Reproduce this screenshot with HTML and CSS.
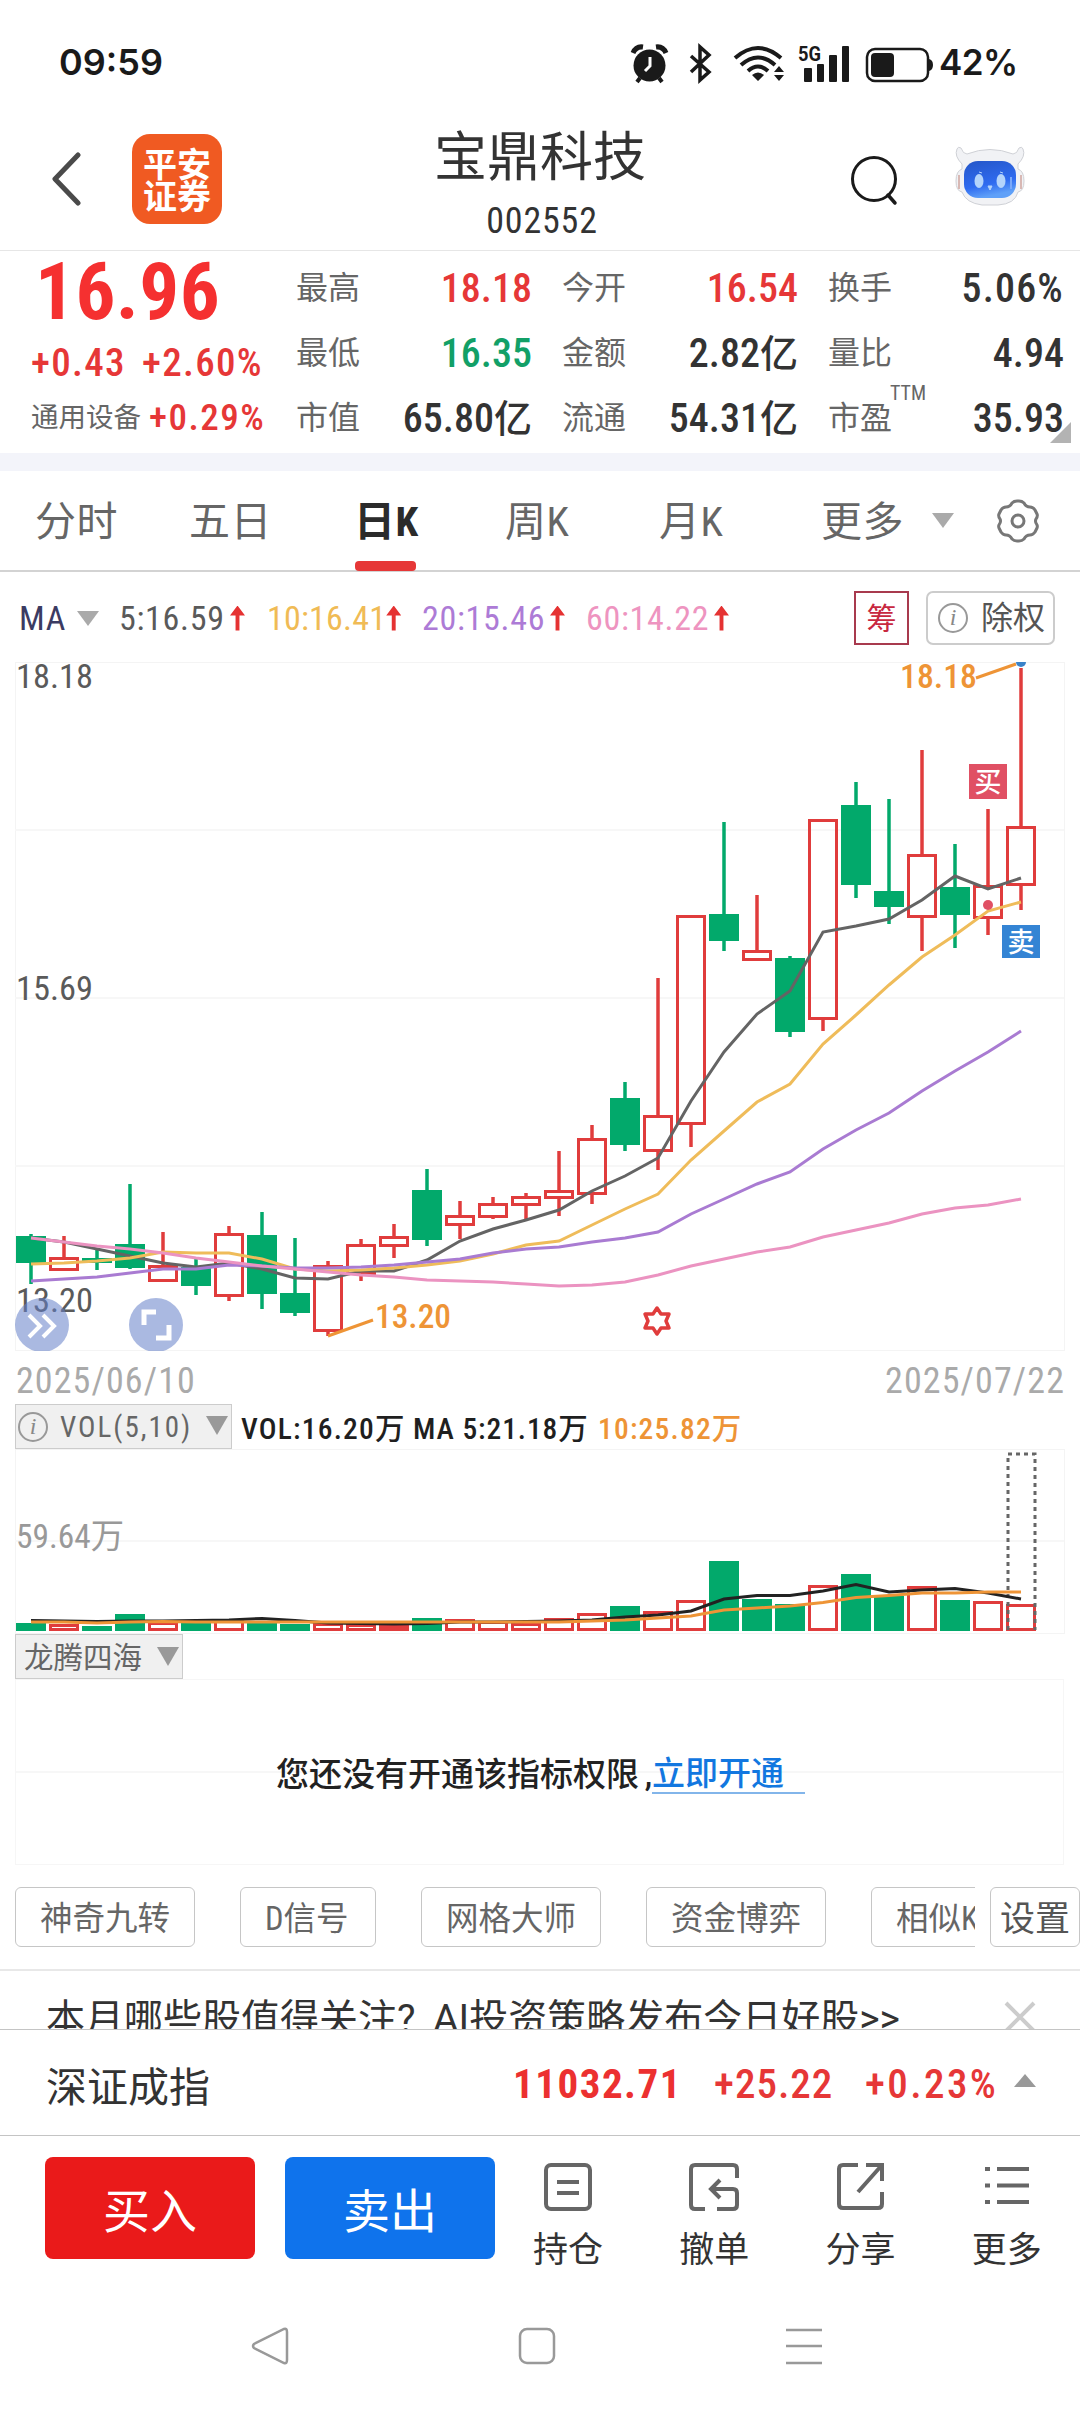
FILE: index.html
```html
<!DOCTYPE html>
<html lang="zh-CN">
<head>
    <meta charset="UTF-8">
    <meta name="viewport" content="width=device-width, initial-scale=1.0">
    <title>宝鼎科技 002552</title>
    <link rel="stylesheet" href="styles.css">
</head>
<body>
    <!-- 状态栏 -->
    <div class="status-bar">
        <span class="clock">09:59</span>
        <svg class="status-icons" width="315" height="60" viewBox="620 30 315 60" fill="#1a1a1a">
            <circle cx="649.5" cy="63.500" r="16"/>
            <path d="M633 51q3-7 10-6M666 51q-3-7-10-6" fill="none" stroke="#1a1a1a" stroke-width="5"/>
            <path d="M640 76l-3 4M659 76l3 4" stroke="#1a1a1a" stroke-width="4"/>
            <path d="M650 55v9l-5 5" fill="none" stroke="#fff" stroke-width="3"/>
            <path d="M691 54l18 16-9 8V45l9 8-18 17" fill="none" stroke="#1a1a1a" stroke-width="3.5"/>
            <path d="M735 56q23-20 46 0M741 63q17-15 34 0M748 69q10-9 20 0" fill="none" stroke="#1a1a1a" stroke-width="4"/>
            <path d="M758 79l-6-6q6-5 12 0zM774 70l5-6 5 6zM774 73h10l-5 6z"/>
            <rect x="804" y="66" width="8" height="14" rx="1"/>
            <rect x="817" y="62" width="7" height="18" rx="1"/>
            <rect x="829" y="53" width="8" height="27" rx="1"/>
            <rect x="842" y="44" width="7" height="36" rx="1"/>
            <text x="798" y="59" class="net-label" textLength="23" lengthAdjust="spacingAndGlyphs">5G</text>
            <rect x="867" y="47" width="61" height="32" rx="8" fill="none" stroke="#1a1a1a" stroke-width="2.5"/>
            <rect x="871" y="51" width="23" height="24" rx="4"/>
            <path d="M929 57q4 1 4 6t-4 6z"/>
        </svg>
        <span class="battery">42%</span>
    </div>

    <!-- 顶部标题 -->
    <div class="header">
        <svg class="back" width="32" height="54" viewBox="0 0 32 54"><path d="M28 3L5 27l23 24" fill="none" stroke="#4a4a4a" stroke-width="5" stroke-linecap="round" stroke-linejoin="round"/></svg>
        <div class="broker-logo">平安<br>证券</div>
        <div class="title">
            <div class="stock-name">宝鼎科技</div>
            <div class="stock-code">002552</div>
        </div>
        <svg class="search" width="50" height="54" viewBox="0 0 50 54"><circle cx="24" cy="25" r="21.500" fill="none" stroke="#1a1a1a" stroke-width="3"/><path d="M38 41l7 8" stroke="#1a1a1a" stroke-width="3.500" stroke-linecap="round"/></svg>
        <svg class="robot" width="76" height="62" viewBox="0 0 76 62">
            <defs>
                <linearGradient id="face" x1="0" y1="0" x2="0.300" y2="1">
                    <stop offset="0" stop-color="#2456c8"/>
                    <stop offset="0.700" stop-color="#2f6bf0"/>
                    <stop offset="1" stop-color="#5fa0f8"/>
                </linearGradient>
            </defs>
            <path d="M10 20Q2 12 5 5q1-3 4-1 2 6 6 6 23-9 46 0 4 0 6-6 3-2 4 1 3 7-5 15v5q6 2 6 12t-6 11q-3 12-20 13H30Q14 59 10 48q-6-1-6-11t6-12z" fill="#f1f2f5" stroke="#cfd1d6" stroke-width="1"/>
            <path d="M7 31v14M69 31v14" stroke="#d8b8b4" stroke-width="2"/>
            <rect x="12" y="17" width="52" height="37" rx="14" fill="url(#face)"/>
            <ellipse cx="27" cy="37" rx="4.500" ry="7" fill="#b4d4fb"/>
            <ellipse cx="49" cy="37" rx="4.500" ry="7" fill="#b4d4fb"/>
            <path d="M36 42h4l-2 4zM27 28l3 1M48 28l3 1" fill="#b4d4fb" stroke="#b4d4fb"/>
            <path d="M59 33v12" stroke="#7aa8fa" stroke-width="2"/>
        </svg>
    </div>

    <!-- 行情 -->
    <div class="quote">
        <div class="quote-main">
            <div class="price">16.96</div>
            <div class="change"><span>+0.43</span><span>+2.60%</span></div>
            <div class="sector"><span class="sector-name">通用设备</span><span class="sector-change">+0.29%</span></div>
        </div>
        <div class="quote-grid">
            <div class="cell"><label>最高</label><b class="up">18.18</b></div>
            <div class="cell"><label>今开</label><b class="up">16.54</b></div>
            <div class="cell"><label>换手</label><b class="wide">5.06%</b></div>
            <div class="cell"><label>最低</label><b class="down">16.35</b></div>
            <div class="cell"><label>金额</label><b>2.82<i>亿</i></b></div>
            <div class="cell"><label>量比</label><b>4.94</b></div>
            <div class="cell"><label>市值</label><b>65.80<i>亿</i></b></div>
            <div class="cell"><label>流通</label><b>54.31<i>亿</i></b></div>
            <div class="cell"><label>市盈<sup>TTM</sup></label><b>35.93</b></div>
        </div>
        <div class="corner"></div>
    </div>

    <!-- 周期切换 -->
    <div class="tabs">
        <span>分时</span>
        <span>五日</span>
        <span class="active">日K</span>
        <span>周K</span>
        <span>月K</span>
        <span>更多</span>
        <em class="arrow-down"></em>
        <svg width="44" height="44" viewBox="0 0 44 44" fill="none" stroke="#777" stroke-width="3" stroke-linejoin="round">
            <path d="M16 4q2-2 5-2h2q3 0 5 2 2 4 6 4 3 0 5 3l2 4q1 2-1 5-1 2 0 4 2 3 1 5l-2 4q-2 3-5 3-4 0-6 4-2 2-5 2h-2q-3 0-5-2-2-4-6-4-3 0-5-3l-2-4q-1-2 1-5 1-2 0-4-2-3-1-5l2-4q2-3 5-3 4 0 6-4z"/>
            <circle cx="22" cy="22" r="6"/>
        </svg>
    </div>

    <!-- 均线 -->
    <div class="ma-row">
        <span class="ma-name">MA</span>
        <em class="arrow-down"></em>
        <span class="ma ma5">5:16.59</span>
        <span class="ma ma10">10:16.41</span>
        <span class="ma ma20">20:15.46</span>
        <span class="ma ma60">60:14.22</span>
        <span class="chip-cost">筹</span>
        <span class="chip-right"><i class="info">i</i>除权</span>
    </div>

    <svg id="kline" class="kline" width="1080" height="689" viewBox="0 662 1080 689"></svg>

    <div class="dates"><span>2025/06/10</span><span>2025/07/22</span></div>

    <!-- 成交量 -->
    <div class="ind-head">
        <span class="ind-select"><i class="info">i</i><span class="vol-name">VOL(5,10)</span><em class="arrow-down"></em></span>
        <span class="vol-text">VOL:16.20万</span>
        <span class="vol-text vol-ma5">MA 5:21.18万</span>
        <span class="vol-text vol-ma10">10:25.82万</span>
    </div>
    <svg id="volume" class="volume" width="1080" height="185" viewBox="0 1449 1080 185"></svg>

    <div class="ind-head">
        <span class="ind-select dragon">龙腾四海<em class="arrow-down"></em></span>
    </div>
    <div class="locked">
        <span class="locked-text">您还没有开通该指标权限</span><span class="comma">,</span><a class="locked-link">立即开通</a>
    </div>

    <div class="tools">
        <div class="tool-list">
            <span>神奇九转</span>
            <span class="short">D信号</span>
            <span>网格大师</span>
            <span>资金博弈</span>
            <span>相似K线</span>
        </div>
        <span class="tool-set">设置</span>
    </div>

    <div class="banner">
        <span>本月哪些股值得关注? AI投资策略发布今日好股&gt;&gt;</span>
        <svg width="32" height="32" viewBox="0 0 32 32"><path d="M2 2l28 28M30 2L2 30" stroke="#ccc" stroke-width="4"/></svg>
    </div>

    <div class="index-row">
        <span class="index-name">深证成指</span>
        <span class="index-value">11032.71</span>
        <span class="index-diff">+25.22</span>
        <span class="index-pct">+0.23%</span>
        <em class="arrow-up"></em>
    </div>

    <!-- 底部操作 -->
    <div class="actions">
        <div class="btn buy">买入</div>
        <div class="btn sell">卖出</div>
        <div class="action">
            <svg width="50" height="50" viewBox="0 0 50 50"><rect x="3" y="3" width="44" height="44" rx="5"/><path d="M14 20h22M14 31h22"/></svg>
            <span>持仓</span>
        </div>
        <div class="action">
            <svg width="50" height="50" viewBox="0 0 50 50"><path d="M48 16V7q0-4-4-4H6Q2 3 2 7v36q0 4 4 4h10M28 47h16q4 0 4-4V31q0-4-4-4H22M31 18l-9 9 9 9"/></svg>
            <span>撤单</span>
        </div>
        <div class="action">
            <svg width="50" height="50" viewBox="0 0 50 50"><path d="M22 3H7Q3 3 3 7v35q0 4 4 4h35q4 0 4-4V30M30 3h16v16M46 3L22 30"/></svg>
            <span>分享</span>
        </div>
        <div class="action">
            <svg width="50" height="50" viewBox="0 0 50 50"><path d="M3 7h5M3 23.500h5M3 40h5M15 7h32M15 23.500h32M15 40h32"/></svg>
            <span>更多</span>
        </div>
    </div>

    <div class="nav">
        <svg width="40" height="40" viewBox="0 0 40 40"><path d="M34 3Q37 2 37 6v28q0 4-3 3L4 22q-2-2 0-4z"/></svg>
        <svg width="40" height="40" viewBox="0 0 40 40"><rect x="3" y="3" width="34" height="34" rx="7"/></svg>
        <svg width="40" height="40" viewBox="0 0 40 40"><path d="M2 4h36M2 20h36M2 37h36"/></svg>
    </div>

    <script src="chart.js"></script>
</body>
</html>
```
FILE: styles.css
```css
* {
    box-sizing: border-box;
}
body {
    margin: 0;
    width: 1080px;
    height: 2412px;
    overflow: hidden;
    background: #fff;
    color: #333;
    font-family: Roboto, "Noto Sans CJK SC", sans-serif;
    font-stretch: 75%;
}
svg {
    display: block;
    flex: none;
}
i, em {
    font-style: normal;
}
.arrow-down {
    border: 11px solid transparent;
    border-top: 15px solid #aaa;
    border-bottom: 0;
}
.arrow-up {
    border: 11px solid transparent;
    border-bottom: 13px solid #999;
    border-top: 0;
}
.up {
    color: #e63737;
}
.down {
    color: #12a067;
}
.info {
    display: inline-block;
    width: 30px;
    height: 30px;
    border: 2px solid #999;
    border-radius: 50%;
    color: #888;
    font: italic 24px/25px "Liberation Serif", serif;
    text-align: center;
}

/* 状态栏 */
.status-bar {
    display: flex;
    align-items: center;
    height: 124px;
    padding-left: 59px;
    color: #1a1a1a;
    font: 600 36px Inter, sans-serif;
}
.clock {
    width: 561px;
}
.net-label {
    font: bold 20px Roboto, sans-serif;
}
.battery {
    margin-left: 4px;
    font-size: 35px;
    letter-spacing: -0.500px;
}

.header {
    display: flex;
    height: 127px;
    border-bottom: 1px solid #e6e6e6;
}
.back {
    margin: 28px 0 0 50px;
}
.broker-logo {
    width: 90px;
    height: 90px;
    margin: 10px 0 0 50px;
    padding-top: 13px;
    border-radius: 18px;
    background: #f05a22;
    color: #fff;
    font: bold 34px/32px "Noto Sans CJK SC", sans-serif;
    text-align: center;
}
.title {
    width: 320px;
    margin-left: 160px;
    padding-top: 3px;
    text-align: center;
}
.stock-name {
    height: 66px;
    margin-left: -4px;
    font-size: 53px;
    line-height: 62px;
}
.stock-code {
    font-size: 36px;
    letter-spacing: 0.800px;
    line-height: 56px;
}
.search {
    margin: 30px 0 0 148px;
}
.robot {
    margin: 20px 0 0 52px;
}

/* 行情 */
.quote {
    position: relative;
    display: flex;
    height: 220px;
    border-bottom: 18px solid #f3f4fa;
}
.quote-main {
    width: 297px;
    padding: 1px 0 0 31px;
    color: #e63737;
    font-weight: 500;
}
.price {
    height: 80px;
    padding-left: 4px;
    color: #f53030;
    font-size: 79px;
    font-weight: 700;
    letter-spacing: 0.500px;
    line-height: 80px;
}
.change {
    display: flex;
    height: 62px;
    font-size: 39px;
    letter-spacing: 1.300px;
    line-height: 62px;
}
.change span:first-child {
    width: 111px;
}
.sector {
    display: flex;
    height: 48px;
    font-size: 37px;
    letter-spacing: 1.500px;
    line-height: 48px;
}
.sector-name {
    width: 118px;
    color: #666;
    font-size: 27.500px;
    font-weight: 400;
    letter-spacing: 0;
}
.quote-grid {
    display: grid;
    grid-template-columns: repeat(3, 235px);
    grid-auto-rows: 65px;
    column-gap: 31px;
    padding-top: 5px;
}
.cell {
    display: flex;
    justify-content: space-between;
    line-height: 65px;
}
.cell label {
    position: relative;
    left: -1px;
    color: #666;
    font-size: 32px;
}
.cell sup {
    position: absolute;
    left: 62px;
    top: -23px;
    font-size: 20px;
    line-height: 60px;
}
.cell b {
    font-size: 40px;
    font-weight: 500;
}
.cell .wide {
    letter-spacing: 1.200px;
}
.cell i {
    font-size: 38px;
}
.corner {
    position: absolute;
    right: 9px;
    bottom: 10px;
    border-left: 21px solid transparent;
    border-bottom: 21px solid #b3b3b3;
}

.tabs {
    display: grid;
    grid-template-columns: 154px 165px 151px 154px 162px 111px 64px 44px;
    align-items: center;
    height: 101px;
    padding-left: 35px;
    border-bottom: 2px solid #d3d3d3;
    color: #666;
    font-size: 41px;
    letter-spacing: 0.500px;
    line-height: 99px;
}
.tabs span {
    height: 99px;
    padding-top: 2px;
}
.tabs em {
    justify-self: start;
}
.tabs .active {
    position: relative;
    color: #2b2b2b;
    font-weight: 700;
}
.tabs .active::after {
    content: "";
    position: absolute;
    left: 1px;
    bottom: -1px;
    width: 61px;
    height: 10px;
    border-radius: 4px;
    background: #e63737;
}

/* 均线 */
.ma-row {
    display: flex;
    align-items: center;
    height: 90px;
    padding: 2px 0 0 19px;
    font-size: 34px;
    letter-spacing: 0.700px;
    line-height: 90px;
}
.ma-name {
    width: 58px;
    color: #3b3b62;
    font-size: 34px;
}
.ma-row .arrow-down {
    margin-right: 20px;
}
.ma {
    display: flex;
    align-items: center;
}
.ma::after {
    content: "";
    flex: none;
    width: 15px;
    height: 25px;
    margin-left: auto;
    background: #e53232;
    clip-path: polygon(50% 0, 100% 40%, 63% 40%, 63% 100%, 37% 100%, 37% 40%, 0 40%);
}
.ma5 {
    width: 126px;
    color: #5a5a5a;
}
.ma10 {
    width: 134px;
    margin-left: 22px;
    color: #f0bb55;
    letter-spacing: 0.200px;
}
.ma20 {
    width: 143px;
    margin-left: 21px;
    color: #ad7bd6;
}
.ma60 {
    width: 143px;
    margin-left: 21px;
    color: #ee94c0;
}
.chip-cost {
    width: 55px;
    height: 54px;
    margin-left: 125px;
    border: 2px solid #a83a4e;
    color: #c8283f;
    font-size: 30px;
    letter-spacing: 0;
    line-height: 52px;
    text-align: center;
}
.chip-right {
    display: flex;
    align-items: center;
    gap: 13px;
    width: 129px;
    height: 54px;
    margin-left: 17px;
    padding-left: 10px;
    border: 2px solid #ccc;
    border-radius: 7px;
    color: #555;
    font-size: 32px;
    letter-spacing: 0;
    line-height: 53px;
    white-space: nowrap;
}

.kline text {
    font-size: 34px;
}
.kline .mark {
    fill: #ee9436;
    font-weight: 500;
}
.kline .badge {
    fill: #fff;
    font-size: 27px;
    font-weight: 500;
    text-anchor: middle;
}
.dates {
    display: flex;
    justify-content: space-between;
    height: 53px;
    padding: 0 15px 0 16px;
    color: #aaa;
    font-size: 36px;
    letter-spacing: 1.100px;
    line-height: 60px;
}

/* 指标 */
.ind-head {
    display: flex;
    height: 45px;
    padding-left: 15px;
    line-height: 45px;
}
.ind-select {
    display: flex;
    align-items: center;
    width: 217px;
    height: 45px;
    margin-right: 9px;
    padding-left: 2px;
    border: 1px solid #ccc;
    background: #f0f0f0;
    color: #666;
    font-size: 30px;
}
.ind-select .arrow-down {
    border-top: 19px solid #999;
    margin: 0 3px 3px auto;
}
.vol-name {
    margin-left: 12px;
    font-size: 29px;
    letter-spacing: 2px;
    line-height: 48px;
}
.dragon {
    width: 168px;
    padding: 3px 0 0 8px;
    font-size: 29.500px;
}
.vol-text {
    width: 172px;
    color: #1f1f1f;
    font-size: 29.500px;
    font-weight: 500;
    letter-spacing: 1.200px;
    line-height: 50px;
    white-space: nowrap;
}
.vol-ma5 {
    width: 185px;
    letter-spacing: 0.900px;
}
.vol-ma10 {
    color: #ee9436;
}
.volume text {
    font-size: 34px;
    fill: #999;
}
.locked {
    display: flex;
    align-items: center;
    height: 186px;
    margin: 0 16px 0 15px;
    padding: 5px 0 0 260px;
    border: 1px solid #f6f6f6;
    background: linear-gradient(#f7f7f7, #f7f7f7) 0 91px / 100% 2px no-repeat;
    color: #222;
    font-size: 33px;
    font-weight: 500;
    line-height: 36px;
}
.comma {
    width: 13px;
    text-align: right;
}
.locked-link {
    width: 153px;
    border-bottom: 2px solid #82b5ea;
    color: #1277e0;
}

.tools {
    display: flex;
    height: 106px;
    padding: 22px 0 0 15px;
    border-bottom: 2px solid #e8e8e8;
    line-height: 63px;
}
.tool-list {
    display: flex;
    gap: 45px;
    width: 960px;
    overflow: hidden;
}
.tool-list span, .tool-set {
    flex: none;
    width: 180px;
    height: 60px;
    padding-left: 24px;
    border: 1px solid #c6c6c6;
    border-radius: 6px;
    color: #666;
    font-size: 32.500px;
    white-space: nowrap;
}
.tool-list .short {
    width: 136px;
}
.tool-set {
    width: 90px;
    margin-left: 15px;
    padding-left: 9px;
    color: #555;
    font-size: 35px;
}
.banner {
    display: flex;
    justify-content: space-between;
    height: 59px;
    padding: 0 44px 0 46px;
    overflow: hidden;
    border-bottom: 1px solid #c4c4c4;
    font-size: 39px;
    font-stretch: 100%;
    line-height: 96px;
    word-spacing: 8px;
}
.banner svg {
    margin-top: 30px;
}
.index-row {
    display: flex;
    align-items: center;
    height: 106px;
    padding: 2px 0 0 46px;
    border-bottom: 1px solid #c4c4c4;
    color: #e63737;
    font-size: 41px;
}
.index-name {
    width: 467px;
    color: #333;
}
.index-value {
    width: 201px;
    color: #ec3030;
    font-weight: 700;
    letter-spacing: 1.500px;
}
.index-diff {
    width: 151px;
    font-weight: 500;
    letter-spacing: 1px;
}
.index-pct {
    width: 149px;
    font-weight: 500;
    letter-spacing: 2.400px;
}
.index-row .arrow-up {
    margin-bottom: 6px;
}

/* 底部操作 */
.actions {
    display: flex;
    height: 164px;
    padding: 21px 0 0 45px;
}
.btn {
    width: 210px;
    height: 102px;
    margin-right: 30px;
    border-radius: 8px;
    color: #fff;
    font-size: 47px;
    line-height: 110px;
    text-align: center;
}
.buy {
    background: #ea1a1a;
}
.sell {
    margin-right: 0;
    background: #0f73ec;
}
.action {
    display: flex;
    flex: 1;
    flex-direction: column;
    align-items: center;
    padding-top: 5px;
    font-size: 35px;
    line-height: 77px;
}
.action svg {
    fill: none;
    stroke: #666;
    stroke-width: 4;
}
.nav {
    display: flex;
    height: 112px;
    padding: 26px 0 0 250px;
}
.nav svg {
    margin-right: 227px;
    fill: none;
    stroke: #999;
    stroke-width: 2.500;
}
```
FILE: chart.js
```js
const RED = '#e03c3c';
const GREEN = '#02a96b';
const X0 = 31;
const STEP = 33;
const BAR = 30;

// [涨跌, 实体上, 实体下, 最高, 最低, 成交量顶部]
const bars = [
    [0, 1236, 1263, 1234, 1284, 1623], [1, 1257, 1271, 1236, 1271, 1624], [0, 1258, 1263, 1249, 1270, 1626],
    [0, 1244, 1268, 1184, 1269, 1614], [1, 1265, 1282, 1232, 1282, 1622], [0, 1267, 1286, 1259, 1295, 1623],
    [1, 1233, 1297, 1226, 1301, 1619], [0, 1235, 1294, 1212, 1309, 1622], [0, 1293, 1313, 1238, 1316, 1624],
    [1, 1265, 1332, 1261, 1336, 1623], [1, 1244, 1275, 1239, 1281, 1624], [1, 1236, 1247, 1224, 1258, 1625],
    [0, 1190, 1240, 1169, 1246, 1618], [1, 1215, 1226, 1201, 1239, 1619], [1, 1203, 1218, 1197, 1219, 1621],
    [1, 1196, 1206, 1193, 1221, 1623], [1, 1190, 1199, 1151, 1216, 1618], [1, 1138, 1195, 1125, 1204, 1613],
    [0, 1098, 1145, 1082, 1151, 1606], [1, 1115, 1152, 978, 1170, 1611], [1, 915, 1125, 915, 1147, 1600],
    [0, 914, 941, 822, 951, 1561], [1, 950, 961, 895, 961, 1599], [0, 958, 1032, 956, 1037, 1604],
    [1, 819, 1020, 819, 1031, 1585], [0, 805, 885, 782, 898, 1574], [0, 891, 907, 799, 924, 1596],
    [1, 854, 918, 750, 951, 1586], [0, 887, 915, 844, 948, 1600], [1, 885, 919, 809, 935, 1601],
    [1, 826, 886, 668, 910, 1604]
];
// 第22根成交量为阴线颜色
const volGreen = [22];

const ma5 = [1238, 1242, 1249, 1256, 1263, 1267, 1263, 1269, 1278, 1279, 1271, 1271, 1260, 1241, 1229, 1220, 1210, 1191, 1176, 1158, 1101, 1052, 1014, 991, 932, 926, 919, 900, 876, 889, 878];
const ma10 = [1264, 1263, 1261, 1258, 1252, 1253, 1253, 1259, 1269, 1271, 1270, 1268, 1265, 1261, 1254, 1245, 1241, 1225, 1209, 1194, 1160, 1131, 1102, 1084, 1044, 1015, 985, 957, 935, 911, 902];
const ma20 = [1281, 1279, 1277, 1273, 1269, 1269, 1265, 1266, 1268, 1268, 1267, 1265, 1262, 1259, 1253, 1249, 1247, 1242, 1238, 1232, 1214, 1199, 1184, 1172, 1149, 1130, 1113, 1091, 1071, 1052, 1031];
const ma60 = [1238, 1242, 1246, 1249, 1253, 1258, 1262, 1266, 1269, 1272, 1275, 1277, 1280, 1281, 1282, 1284, 1286, 1285, 1282, 1275, 1266, 1259, 1252, 1247, 1237, 1230, 1223, 1214, 1208, 1205, 1199];
const vol5 = [1620.5, 1621, 1621.5, 1621, 1621, 1620.5, 1620, 1618.5, 1620.5, 1623, 1623.5, 1624, 1623.5, 1622, 1622, 1621.5, 1621, 1620, 1617, 1615, 1611, 1599, 1595.5, 1595.5, 1591, 1584.5, 1592, 1590, 1588.5, 1593, 1599];
const vol10 = [1622, 1622, 1623, 1622, 1621.5, 1622, 1622, 1622, 1622, 1622, 1622, 1622, 1622, 1622, 1622, 1622, 1622, 1621, 1620, 1618, 1616, 1610, 1608, 1606, 1602.5, 1597.5, 1595.5, 1593, 1593, 1592, 1592];

const cx = i => X0 + STEP * i;

function rect(x, y, w, h, fill, stroke = 'none', sw = 0) {
    return `<rect x="${x + sw / 2}" y="${y + sw / 2}" width="${w - sw}" height="${h - sw}" fill="${fill}" stroke="${stroke}" stroke-width="${sw}"/>`;
}

function line(points, color, width = 3) {
    return `<polyline points="${points.map((y, i) => cx(i) + ',' + y).join(' ')}" fill="none" stroke="${color}" stroke-width="${width}"/>`;
}

function grid(top, bottom, rows) {
    return `<rect x="15.500" y="${top + 0.5}" width="1049" height="${bottom - top - 1}" fill="none" stroke="#f4f4f4"/>` +
        rows.map(y => `<path d="M15 ${y}H1064" stroke="#f7f7f7" stroke-width="2"/>`).join('');
}

function label(x, y, text, w, attrs) {
    return `<text x="${x}" y="${y}" textLength="${w}" lengthAdjust="spacingAndGlyphs" ${attrs}>${text}</text>`;
}

function drawKline() {
    let s = grid(662, 1351, [830, 998, 1166]);
    bars.forEach(([up, top, bottom, high, low], i) => {
        const x = cx(i);
        const color = up ? RED : GREEN;
        if (high < top) s += `<path d="M${x} ${high}V${top}" stroke="${color}" stroke-width="3.500"/>`;
        if (low > bottom) s += `<path d="M${x} ${bottom}V${low}" stroke="${color}" stroke-width="3.500"/>`;
        s += up ? rect(x - 15, top, BAR, bottom - top, 'none', RED, 3) : rect(x - 15, top, BAR, bottom - top, GREEN);
    });
    s += line(ma5, '#646464') + line(ma10, '#efbc5a') + line(ma20, '#a97bd2') + line(ma60, '#eb93c1');

    s += label(16, 688, '18.18', 77, 'fill="#5a5a5a"');
    s += label(16, 1000, '15.69', 77, 'fill="#5a5a5a"');
    s += label(16, 1312, '13.20', 77, 'fill="#5a5a5a"');

    // 最高最低标注
    s += '<path d="M976 678L1016 664M328 1336L373 1320" stroke="#ee9436" stroke-width="3"/>';
    s += label(900, 688, '18.18', 77, 'class="mark"');
    s += label(375, 1328, '13.20', 76, 'class="mark"');
    s += '<circle cx="1021" cy="662" r="5" fill="#3a82c8"/>';

    // 买卖点
    s += '<circle cx="988" cy="905" r="5" fill="#e05064"/>';
    s += rect(969, 764, 38, 35, '#e05064') + '<text x="988" y="792" class="badge">买</text>';
    s += rect(1002, 925, 38, 33, '#3484d4') + '<text x="1021" y="952" class="badge">卖</text>';

    s += '<path d="M657 1308L661 1314L669 1314L666 1321L669 1328L661 1328L657 1334L653 1328L645 1328L648 1321L645 1314L653 1314Z" fill="none" stroke="#e03c3c" stroke-width="3.500" stroke-linejoin="round"/>';

    // 悬浮按钮
    s += '<g fill="#6480c8" fill-opacity="0.550"><circle cx="42" cy="1325" r="27"/><circle cx="156" cy="1325" r="27"/></g>';
    s += '<path d="M29 1315l11 11-11 11M43 1315l11 11-11 11" fill="none" stroke="#fff" stroke-width="4"/>';
    s += '<path d="M144 1325v-13h12M156 1338h13v-13" fill="none" stroke="#fff" stroke-width="5"/>';
    document.getElementById('kline').innerHTML = s;
}

function drawVolume() {
    let s = grid(1449, 1634, [1541]);
    bars.forEach((b, i) => {
        const x = cx(i) - 15;
        const top = b[5];
        s += b[0] && !volGreen.includes(i) ? rect(x, top, BAR, 1631 - top, 'none', RED, 3) : rect(x, top, BAR, 1631 - top, GREEN);
    });
    // 预估量
    s += '<path d="M1008 1630V1454H1035V1630" fill="none" stroke="#666" stroke-width="3" stroke-dasharray="4 4"/>';
    s += line(vol5, '#222', 3) + line(vol10, '#ee9436', 3);
    s += label(16, 1548, '59.64万', 108, '');
    document.getElementById('volume').innerHTML = s;
}

drawKline();
drawVolume();
```
